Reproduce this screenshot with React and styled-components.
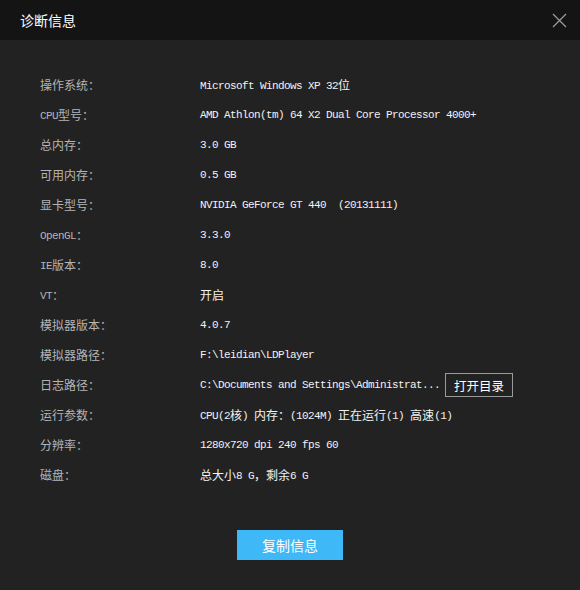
import React from "react";
import styled, { createGlobalStyle } from "styled-components";

const GlobalStyle = createGlobalStyle`
  html, body {
    margin: 0;
    padding: 0;
    background: #222222;
  }
`;

const Dialog = styled.div`
  width: 580px;
  height: 590px;
  background: #222222;
  display: flex;
  flex-direction: column;
  font-family: "Liberation Mono", "Noto Sans CJK SC", monospace;
`;

const Header = styled.div`
  height: 40px;
  background: #141414;
  display: flex;
  align-items: center;
  justify-content: space-between;
  padding: 0 12px 0 20px;
`;

const Title = styled.div`
  font-family: "Noto Sans CJK SC", sans-serif;
  font-size: 14px;
  color: #ffffff;
`;

const CloseButton = styled.button`
  width: 18px;
  height: 18px;
  padding: 0;
  border: none;
  background: transparent;
  display: flex;
  align-items: center;
  justify-content: center;
  cursor: pointer;
`;

const Body = styled.div`
  flex: 1;
  display: flex;
  flex-direction: column;
  align-items: center;
  padding: 30px 0 30px;
`;

const InfoList = styled.div`
  align-self: stretch;
  padding-left: 40px;
  display: grid;
  grid-template-columns: 160px 1fr;
  grid-auto-rows: 30px;
`;

const Label = styled.div`
  display: flex;
  align-items: center;
  color: #b4b4b4;
  white-space: pre;
`;

const Value = styled.div`
  display: flex;
  align-items: center;
  color: #f2f2f2;
  white-space: pre;
`;

const Line = styled.span`
  line-height: 16px;
`;

const Ascii = styled.span`
  font-family: "Liberation Mono", monospace;
  font-size: 11px;
  letter-spacing: -0.6px;
  vertical-align: 1px;
`;

const Han = styled.span`
  font-family: "Noto Sans CJK SC", sans-serif;
  font-size: 12px;
`;

const SmallButton = styled.button`
  margin-left: 5px;
  width: 68px;
  height: 24px;
  padding: 0;
  background: transparent;
  border: 1px solid #9a9a9a;
  color: #ffffff;
  font-family: "Noto Sans CJK SC", sans-serif;
  font-size: 12.5px;
  cursor: pointer;
`;

const CopyButton = styled.button`
  margin-top: 40px;
  width: 106px;
  height: 30px;
  border: none;
  background: #3fb8f8;
  color: #ffffff;
  font-family: "Noto Sans CJK SC", sans-serif;
  font-size: 14px;
  cursor: pointer;
`;

const Mixed = ({ text }) => {
  const parts = text.split(/([\u3000-\u9fff\uff00-\uffef]+)/).filter(Boolean);
  return (
    <Line>
      {parts.map((p, i) =>
        /[\u3000-\u9fff\uff00-\uffef]/.test(p) ? (
          <Han key={i}>{p}</Han>
        ) : (
          <Ascii key={i}>{p}</Ascii>
        )
      )}
    </Line>
  );
};

const rows = [
  ["操作系统：", "Microsoft Windows XP 32位"],
  ["CPU型号：", "AMD Athlon(tm) 64 X2 Dual Core Processor 4000+"],
  ["总内存：", "3.0 GB"],
  ["可用内存：", "0.5 GB"],
  ["显卡型号：", "NVIDIA GeForce GT 440  (20131111)"],
  ["OpenGL：", "3.3.0"],
  ["IE版本：", "8.0"],
  ["VT：", "开启"],
  ["模拟器版本：", "4.0.7"],
  ["模拟器路径：", "F:\\leidian\\LDPlayer"],
  ["日志路径：", "C:\\Documents and Settings\\Administrat...", true],
  ["运行参数：", "CPU(2核) 内存：(1024M) 正在运行(1) 高速(1)"],
  ["分辨率：", "1280x720 dpi 240 fps 60"],
  ["磁盘：", "总大小8 G，剩余6 G"],
];

const App = () => {
  return (
    <Dialog>
      <GlobalStyle />
      <Header>
        <Title>诊断信息</Title>
        <CloseButton>
          <svg width="15" height="15" viewBox="0 0 15 15">
            <path d="M1 1 L14 14 M14 1 L1 14" stroke="#9a9a9a" strokeWidth="1.3" />
          </svg>
        </CloseButton>
      </Header>
      <Body>
        <InfoList>
          {rows.map(([label, value, hasButton]) => (
            <React.Fragment key={label}>
              <Label>
                <Mixed text={label} />
              </Label>
              <Value>
                <Mixed text={value} />
                {hasButton && <SmallButton>打开目录</SmallButton>}
              </Value>
            </React.Fragment>
          ))}
        </InfoList>
        <CopyButton>复制信息</CopyButton>
      </Body>
    </Dialog>
  );
};

export default App;
